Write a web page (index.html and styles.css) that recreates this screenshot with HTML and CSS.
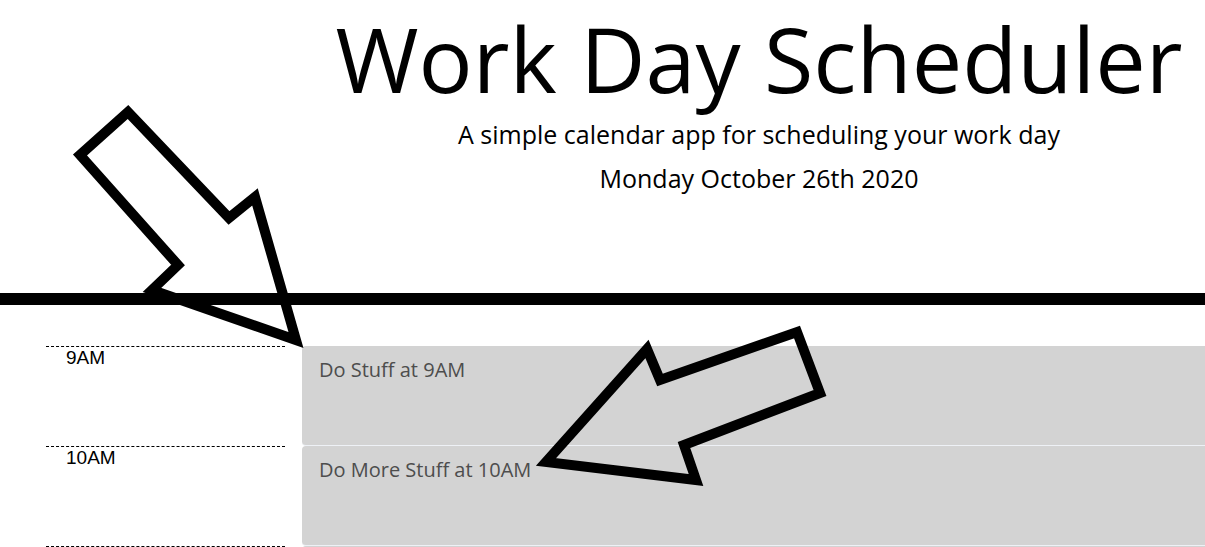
FILE: index.html
```html
<!DOCTYPE html>
<html lang="en">
<head>
<meta charset="utf-8">
<title>Work Day Scheduler</title>
<link rel="stylesheet" href="styles.css">
</head>
<body>
<div class="page">
  <header class="jumbotron">
    <h1 class="title">Work Day Scheduler</h1>
    <p class="lead">A simple calendar app for scheduling your work day</p>
    <p class="lead" id="currentDay">Monday October 26th 2020</p>
  </header>
  <div class="divider"></div>
  <main class="container">
    <div class="time-block">
      <div class="hour">9AM</div>
      <textarea class="description">Do Stuff at 9AM</textarea>
    </div>
    <div class="time-block">
      <div class="hour">10AM</div>
      <textarea class="description">Do More Stuff at 10AM</textarea>
    </div>
    <div class="time-block">
      <div class="hour">11AM</div>
      <textarea class="description"></textarea>
    </div>
  </main>
</div>
<svg class="arrows" width="1205" height="547" viewBox="0 0 1205 547" aria-hidden="true">
  <polygon points="128,112 80,155 178,265 152,290 296,340 255,197 229,218" />
  <polygon points="797,332 820,393 684,445 696,480 546,462 647,349 660,380" />
</svg>
</body>
</html>
```

FILE: styles.css
```css
html, body {
  margin: 0;
  padding: 0;
  overflow: hidden;
  background: #fff;
}

body {
  width: 1205px;
  height: 547px;
  position: relative;
  font-family: "Open Sans", "Liberation Sans", sans-serif;
  color: #000;
}

.page {
  width: 1518px;
}

.jumbotron {
  text-align: center;
  padding-top: 4px;
}

.title {
  margin: 0;
  font-size: 90px;
  font-weight: 400;
  line-height: 108px;
}

.lead {
  margin: 4px 0 0;
  font-size: 25px;
  font-weight: 400;
  line-height: 36px;
}

#currentDay {
  margin-top: 8px;
}

.divider {
  height: 12px;
  background: #000;
  margin-top: 97px;
}

.container {
  padding-top: 41px;
}

.time-block {
  display: flex;
  height: 100px;
}

.hour {
  width: 219px;
  margin-left: 46px;
  padding-left: 20px;
  border-top: 1px dashed #000;
  font-family: "Liberation Sans", Arial, sans-serif;
  font-size: 19px;
  line-height: 20px;
  padding-top: 1px;
  box-sizing: content-box;
}

.description {
  margin: 0 0 0 17px;
  flex: 1;
  height: 100px;
  box-sizing: border-box;
  background: #d3d3d3;
  border: none;
  border-bottom: 1px solid #eef1f6;
  border-radius: 4px;
  padding: 11px 17px;
  font-family: "Open Sans", sans-serif;
  font-size: 20px;
  line-height: 26px;
  color: #4d4d4d;
  resize: none;
  outline: none;
}

.arrows {
  position: absolute;
  left: 0;
  top: 0;
  pointer-events: none;
}

.arrows polygon {
  fill: none;
  stroke: #000;
  stroke-width: 10;
  stroke-linejoin: miter;
  stroke-miterlimit: 10;
}
```
